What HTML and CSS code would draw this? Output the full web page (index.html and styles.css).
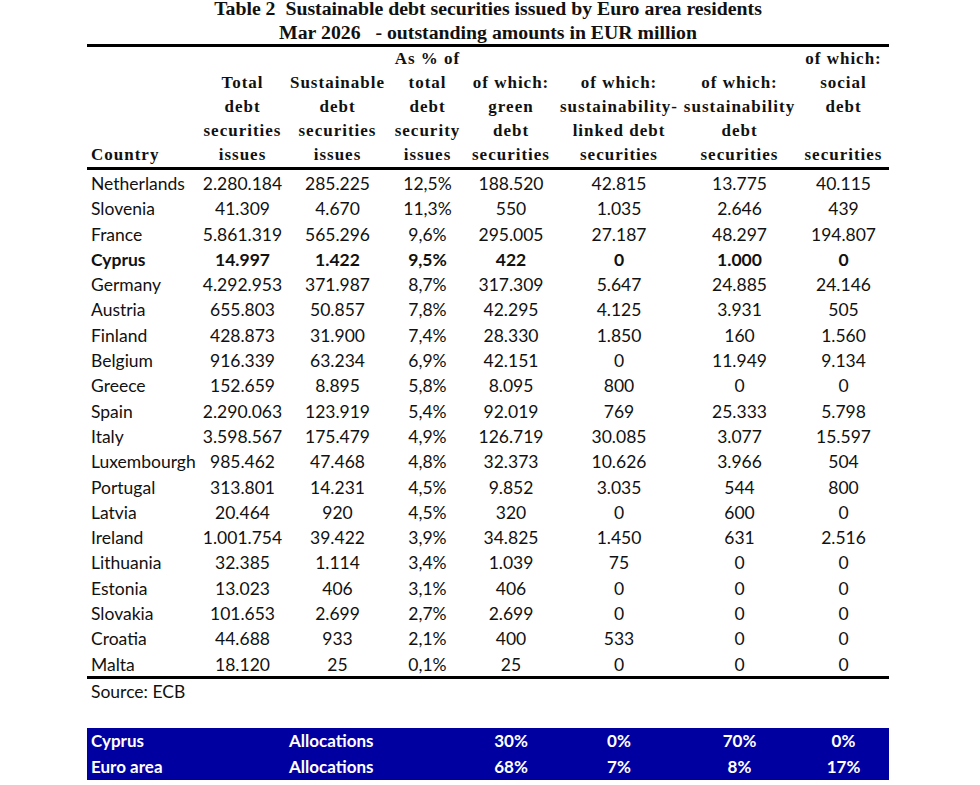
FILE: index.html
```html
<!DOCTYPE html>
<html lang="en">
<head>
  <meta charset="UTF-8">
  <title>Table 2 Sustainable debt securities</title>
  <link rel="stylesheet" href="styles.css">
</head>
<body>
  <div class="sheet">
    <div class="title">
      <div>Table 2&nbsp; Sustainable debt securities issued by Euro area residents</div>
      <div>Mar 2026&nbsp;&nbsp; - outstanding amounts in EUR million</div>
    </div>

    <table class="data">
      <colgroup>
        <col class="c-country">
        <col class="c-total">
        <col class="c-sust">
        <col class="c-pct">
        <col class="c-green">
        <col class="c-linked">
        <col class="c-slb">
        <col class="c-social">
      </colgroup>
      <thead>
        <tr>
          <th class="left">Country</th>
          <th>Total<br>debt<br>securities<br>issues</th>
          <th>Sustainable<br>debt<br>securities<br>issues</th>
          <th>As % of<br>total<br>debt<br>security<br>issues</th>
          <th>of which:<br>green<br>debt<br>securities</th>
          <th>of which:<br>sustainability-<br>linked debt<br>securities</th>
          <th>of which:<br>sustainability<br>debt<br>securities</th>
          <th>of which:<br>social<br>debt<br>&nbsp;<br>securities</th>
        </tr>
      </thead>
      <tbody>
        <tr><td class="left">Netherlands</td><td>2.280.184</td><td>285.225</td><td>12,5%</td><td>188.520</td><td>42.815</td><td>13.775</td><td>40.115</td></tr>
        <tr><td class="left">Slovenia</td><td>41.309</td><td>4.670</td><td>11,3%</td><td>550</td><td>1.035</td><td>2.646</td><td>439</td></tr>
        <tr><td class="left">France</td><td>5.861.319</td><td>565.296</td><td>9,6%</td><td>295.005</td><td>27.187</td><td>48.297</td><td>194.807</td></tr>
        <tr class="strong"><td class="left">Cyprus</td><td>14.997</td><td>1.422</td><td>9,5%</td><td>422</td><td>0</td><td>1.000</td><td>0</td></tr>
        <tr><td class="left">Germany</td><td>4.292.953</td><td>371.987</td><td>8,7%</td><td>317.309</td><td>5.647</td><td>24.885</td><td>24.146</td></tr>
        <tr><td class="left">Austria</td><td>655.803</td><td>50.857</td><td>7,8%</td><td>42.295</td><td>4.125</td><td>3.931</td><td>505</td></tr>
        <tr><td class="left">Finland</td><td>428.873</td><td>31.900</td><td>7,4%</td><td>28.330</td><td>1.850</td><td>160</td><td>1.560</td></tr>
        <tr><td class="left">Belgium</td><td>916.339</td><td>63.234</td><td>6,9%</td><td>42.151</td><td>0</td><td>11.949</td><td>9.134</td></tr>
        <tr><td class="left">Greece</td><td>152.659</td><td>8.895</td><td>5,8%</td><td>8.095</td><td>800</td><td>0</td><td>0</td></tr>
        <tr><td class="left">Spain</td><td>2.290.063</td><td>123.919</td><td>5,4%</td><td>92.019</td><td>769</td><td>25.333</td><td>5.798</td></tr>
        <tr><td class="left">Italy</td><td>3.598.567</td><td>175.479</td><td>4,9%</td><td>126.719</td><td>30.085</td><td>3.077</td><td>15.597</td></tr>
        <tr><td class="left">Luxembourgh</td><td>985.462</td><td>47.468</td><td>4,8%</td><td>32.373</td><td>10.626</td><td>3.966</td><td>504</td></tr>
        <tr><td class="left">Portugal</td><td>313.801</td><td>14.231</td><td>4,5%</td><td>9.852</td><td>3.035</td><td>544</td><td>800</td></tr>
        <tr><td class="left">Latvia</td><td>20.464</td><td>920</td><td>4,5%</td><td>320</td><td>0</td><td>600</td><td>0</td></tr>
        <tr><td class="left">Ireland</td><td>1.001.754</td><td>39.422</td><td>3,9%</td><td>34.825</td><td>1.450</td><td>631</td><td>2.516</td></tr>
        <tr><td class="left">Lithuania</td><td>32.385</td><td>1.114</td><td>3,4%</td><td>1.039</td><td>75</td><td>0</td><td>0</td></tr>
        <tr><td class="left">Estonia</td><td>13.023</td><td>406</td><td>3,1%</td><td>406</td><td>0</td><td>0</td><td>0</td></tr>
        <tr><td class="left">Slovakia</td><td>101.653</td><td>2.699</td><td>2,7%</td><td>2.699</td><td>0</td><td>0</td><td>0</td></tr>
        <tr><td class="left">Croatia</td><td>44.688</td><td>933</td><td>2,1%</td><td>400</td><td>533</td><td>0</td><td>0</td></tr>
        <tr><td class="left">Malta</td><td>18.120</td><td>25</td><td>0,1%</td><td>25</td><td>0</td><td>0</td><td>0</td></tr>
      </tbody>
    </table>

    <div class="source">Source: ECB</div>

    <table class="alloc">
      <colgroup>
        <col class="c-country">
        <col class="c-total">
        <col class="c-sust">
        <col class="c-pct">
        <col class="c-green">
        <col class="c-linked">
        <col class="c-slb">
        <col class="c-social">
      </colgroup>
      <tr><td class="left">Cyprus</td><td></td><td class="left">Allocations</td><td></td><td>30%</td><td>0%</td><td>70%</td><td>0%</td></tr>
      <tr><td class="left">Euro area</td><td></td><td class="left">Allocations</td><td></td><td>68%</td><td>7%</td><td>8%</td><td>17%</td></tr>
    </table>
  </div>
</body>
</html>
```

FILE: styles.css
```css
body {
  margin: 0;
  background: #fff;
  color: #111;
  font-family: Lato, "Liberation Sans", sans-serif;
}

.sheet {
  width: 802px;
  margin-left: 87px;
}

.title {
  margin-top: -4px;
  font-family: "Liberation Serif", serif;
  font-weight: bold;
  font-size: 19.8px;
  line-height: 24px;
  text-align: center;
}

table {
  width: 802px;
  border-collapse: collapse;
  table-layout: fixed;
}

.c-country { width: 113px; }
.c-total { width: 85px; }
.c-sust { width: 105px; }
.c-pct { width: 75px; }
.c-green { width: 92px; }
.c-linked { width: 124px; }
.c-slb { width: 117px; }
.c-social { width: 91px; }

.data {
  border-top: 3px solid #000;
  border-bottom: 3px solid #000;
}

.data thead th {
  border-bottom: 3px solid #000;
  font-family: "Liberation Serif", serif;
  font-weight: bold;
  font-size: 17px;
  line-height: 24px;
  letter-spacing: 1px;
  vertical-align: bottom;
  text-align: center;
  padding: 0;
  white-space: nowrap;
}

.data td {
  font-size: 17.5px;
  line-height: 22.3px;
  padding: 3px 0 0;
  text-align: center;
  white-space: nowrap;
}

.data th.left,
.data td.left {
  text-align: left;
  padding-left: 4px;
}

.data .strong td {
  font-weight: bold;
}

.source {
  font-size: 17.5px;
  line-height: 25px;
  padding-left: 4px;
}

.alloc {
  margin-top: 24px;
  background: #0000a0;
  color: #fff;
}

.alloc td {
  font-size: 17px;
  font-weight: bold;
  line-height: 26px;
  padding: 0;
  text-align: center;
  white-space: nowrap;
}

.alloc td.left {
  padding-left: 4px;
  text-align: left;
}
```
